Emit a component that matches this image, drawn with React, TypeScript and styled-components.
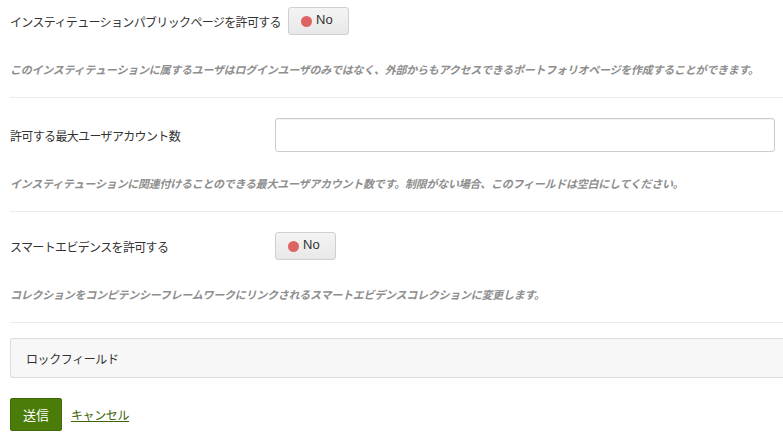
import React from "react";
import styled, { createGlobalStyle } from "styled-components";

const GlobalStyle = createGlobalStyle`
    body {
        margin: 0;
        background: #fff;
        font-family: "Liberation Sans", "Noto Sans CJK JP", sans-serif;
        color: #333;
    }
`;

const App = () => {
    return (
        <>
            <GlobalStyle />
            <Form>
                <Section>
                    <Row>
                        <Label width={278}>
                            インスティテューションパブリックページを許可する
                        </Label>
                        <Switch>
                            <Dot />
                            No
                        </Switch>
                    </Row>
                    <Help gap={27}>
                        このインスティテューションに属するユーザはログインユーザのみではなく、外部からもアクセスできるポートフォリオページを作成することができます。
                    </Help>
                </Section>
                <Section>
                    <Row>
                        <Label width={265}>許可する最大ユーザアカウント数</Label>
                        <Input type="text" />
                    </Row>
                    <Help gap={24}>
                        インスティテューションに関連付けることのできる最大ユーザアカウント数です。制限がない場合、このフィールドは空白にしてください。
                    </Help>
                </Section>
                <Section last>
                    <Row>
                        <Label width={265}>スマートエビデンスを許可する</Label>
                        <Switch>
                            <Dot />
                            No
                        </Switch>
                    </Row>
                    <Help gap={27}>
                        コレクションをコンピテンシーフレームワークにリンクされるスマートエビデンスコレクションに変更します。
                    </Help>
                </Section>
                <Fieldset>
                    <Legend>ロックフィールド</Legend>
                </Fieldset>
                <Actions>
                    <Submit>送信</Submit>
                    <Cancel href="#">キャンセル</Cancel>
                </Actions>
            </Form>
        </>
    );
};

export default App;

const Form = styled.div`
    padding: 7px 0 0 10px;
`;

const Section = styled.div<{ last?: boolean }>`
    border-bottom: 1px solid #ebebeb;
    padding-bottom: 19px;
    margin-bottom: ${(p) => (p.last ? 15 : 20)}px;
`;

const Row = styled.div`
    display: flex;
    align-items: center;
`;

const Label = styled.label<{ width: number }>`
    width: ${(p) => p.width}px;
    flex-shrink: 0;
    font-size: 12px;
    letter-spacing: -0.65px;
    color: #333;
    white-space: nowrap;
`;

const Switch = styled.div`
    width: 61px;
    height: 28px;
    box-sizing: border-box;
    border: 1px solid #cfcfcf;
    border-radius: 3px;
    background: linear-gradient(#f4f4f4, #e8e8e8);
    display: flex;
    align-items: center;
    padding-left: 12px;
    padding-bottom: 3px;
    gap: 4px;
    font-size: 13px;
    color: #333;
    line-height: 1;
`;

const Dot = styled.span`
    width: 11px;
    height: 11px;
    border-radius: 50%;
    background: #de6462;
    margin-top: 3px;
`;

const Input = styled.input`
    width: 500px;
    height: 34px;
    box-sizing: border-box;
    border: 1px solid #ccc;
    border-radius: 3px;
    box-shadow: inset 0 1px 1px rgba(0, 0, 0, 0.05);
`;

const Help = styled.p<{ gap: number }>`
    margin: ${(p) => p.gap}px 0 0;
    line-height: 16px;
    font-size: 11px;
    letter-spacing: -0.25px;
    font-style: italic;
    font-weight: bold;
    color: #8e8e8e;
    white-space: nowrap;
`;

const Fieldset = styled.div`
    height: 40px;
    box-sizing: border-box;
    border: 1px solid #dcdcdc;
    border-right: none;
    border-radius: 3px 0 0 3px;
    background: #f7f7f7;
    display: flex;
    align-items: center;
    padding-left: 15px;
`;

const Legend = styled.span`
    font-size: 12px;
    letter-spacing: -0.4px;
    color: #333;
`;

const Actions = styled.div`
    display: flex;
    align-items: center;
    gap: 9px;
    margin-top: 20px;
`;

const Submit = styled.button`
    width: 52px;
    height: 33px;
    border: 1px solid #3f6b06;
    border-radius: 2px;
    background: #4b7b09;
    color: #fff;
    font-size: 13px;
    font-family: "Liberation Sans", "Noto Sans CJK JP", sans-serif;
    padding: 0;
`;

const Cancel = styled.a`
    font-size: 12px;
    letter-spacing: -0.4px;
    color: #3e6407;
    text-decoration: underline;
`;
